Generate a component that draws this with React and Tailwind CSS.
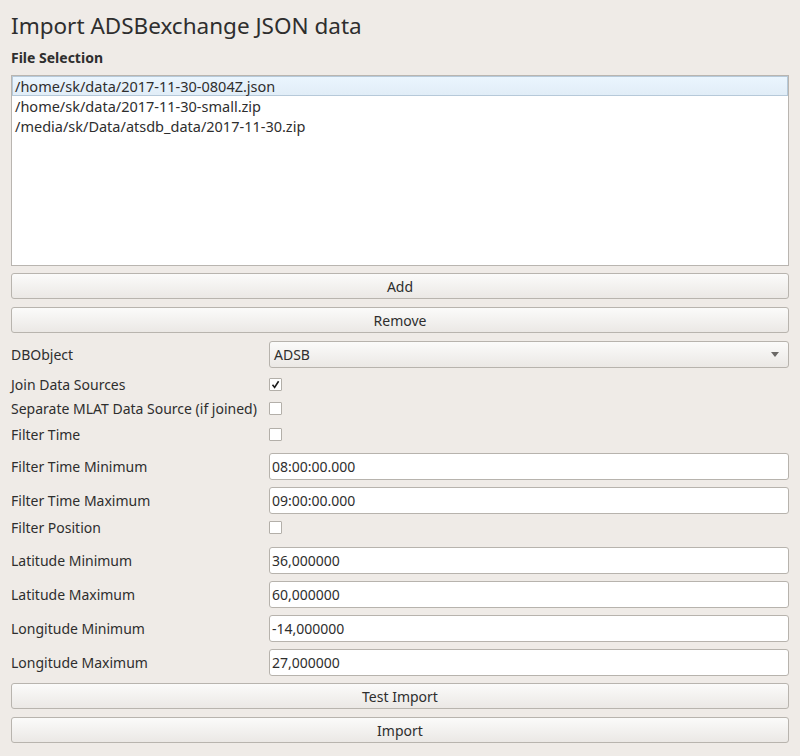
import { useState } from 'react'

const files = [
  '/home/sk/data/2017-11-30-0804Z.json',
  '/home/sk/data/2017-11-30-small.zip',
  '/media/sk/Data/atsdb_data/2017-11-30.zip',
]

function Button({ children, className = '' }) {
  return (
    <button className={`w-full h-[26px] rounded-[3px] border border-[#b8b4ae] bg-gradient-to-b from-[#fbfbfa] to-[#ebe8e5] text-[14px] text-[#2e2e2e] ${className}`}>
      {children}
    </button>
  )
}

function Check({ checked }) {
  return (
    <div className="w-[13px] h-[13px] border border-[#b3afa9] bg-white flex items-center justify-center rounded-[1px]">
      {checked && (
        <svg width="9" height="9" viewBox="0 0 9 9">
          <path d="M1.5 4.8 L3.6 7.4 L7.6 1.2" fill="none" stroke="#1a1a1a" strokeWidth="1.6" />
        </svg>
      )}
    </div>
  )
}

function Input({ value }) {
  return (
    <input
      defaultValue={value}
      className="flex-1 h-[27px] rounded-[3px] border border-[#b7b3ad] bg-white px-[2px] text-[14px] text-[#2e2e2e] outline-none"
    />
  )
}

function Row({ label, children, className = '' }) {
  return (
    <div className={`flex items-center ${className}`}>
      <div className="w-[258px] shrink-0 text-[14px] text-[#2e2e2e]">{label}</div>
      {children}
    </div>
  )
}

export default function App() {
  const [selected, setSelected] = useState(0)

  return (
    <div className="w-[800px] h-[756px] bg-[#efebe7] px-[11px] font-['Noto_Sans',sans-serif] text-[#2e2e2e]">
      <h1 className="pt-[11px] h-[44px] text-[22.5px] leading-[30px]">Import ADSBexchange JSON data</h1>
      <div className="h-[31px] text-[14px] font-bold leading-[28px]">File Selection</div>

      {/* file list */}
      <div className="h-[191px] border border-[#b9b5b0] bg-white">
        {files.map((f, i) => (
          <div
            key={f}
            onClick={() => setSelected(i)}
            className={`h-[20px] px-[2px] text-[14.5px] leading-[19px] ${i === selected ? 'bg-gradient-to-b from-[#eaf5fe] to-[#e1edf7] border border-[#b6c9d9]' : 'border border-transparent'}`}
          >
            {f}
          </div>
        ))}
      </div>

      <Button className="mt-[7px]">Add</Button>
      <Button className="mt-[8px]">Remove</Button>

      <Row label="DBObject" className="mt-[8px] h-[27px]">
        <div className="flex-1 h-[27px] rounded-[3px] border border-[#b7b3ad] bg-gradient-to-b from-[#fbfbfa] to-[#ebe8e5] flex items-center justify-between pl-[4px] pr-[9px] text-[14px]">
          <span>ADSB</span>
          <svg width="8" height="5" viewBox="0 0 8 5">
            <path d="M0 0 L8 0 L4 5 Z" fill="#6b6966" />
          </svg>
        </div>
      </Row>
      <Row label="Join Data Sources" className="mt-[7px] h-[18px]">
        <Check checked />
      </Row>
      <Row label="Separate MLAT Data Source (if joined)" className="mt-[6px] h-[18px]">
        <Check />
      </Row>
      <Row label="Filter Time" className="mt-[8px] h-[18px]">
        <Check />
      </Row>
      <Row label="Filter Time Minimum" className="mt-[10px] h-[27px]">
        <Input value="08:00:00.000" />
      </Row>
      <Row label="Filter Time Maximum" className="mt-[7px] h-[27px]">
        <Input value="09:00:00.000" />
      </Row>
      <Row label="Filter Position" className="mt-[4px] h-[18px]">
        <Check />
      </Row>
      <Row label="Latitude Minimum" className="mt-[11px] h-[27px]">
        <Input value="36,000000" />
      </Row>
      <Row label="Latitude Maximum" className="mt-[7px] h-[27px]">
        <Input value="60,000000" />
      </Row>
      <Row label="Longitude Minimum" className="mt-[7px] h-[27px]">
        <Input value="-14,000000" />
      </Row>
      <Row label="Longitude Maximum" className="mt-[7px] h-[27px]">
        <Input value="27,000000" />
      </Row>

      <Button className="mt-[7px]">Test Import</Button>
      <Button className="mt-[8px]">Import</Button>
    </div>
  )
}
